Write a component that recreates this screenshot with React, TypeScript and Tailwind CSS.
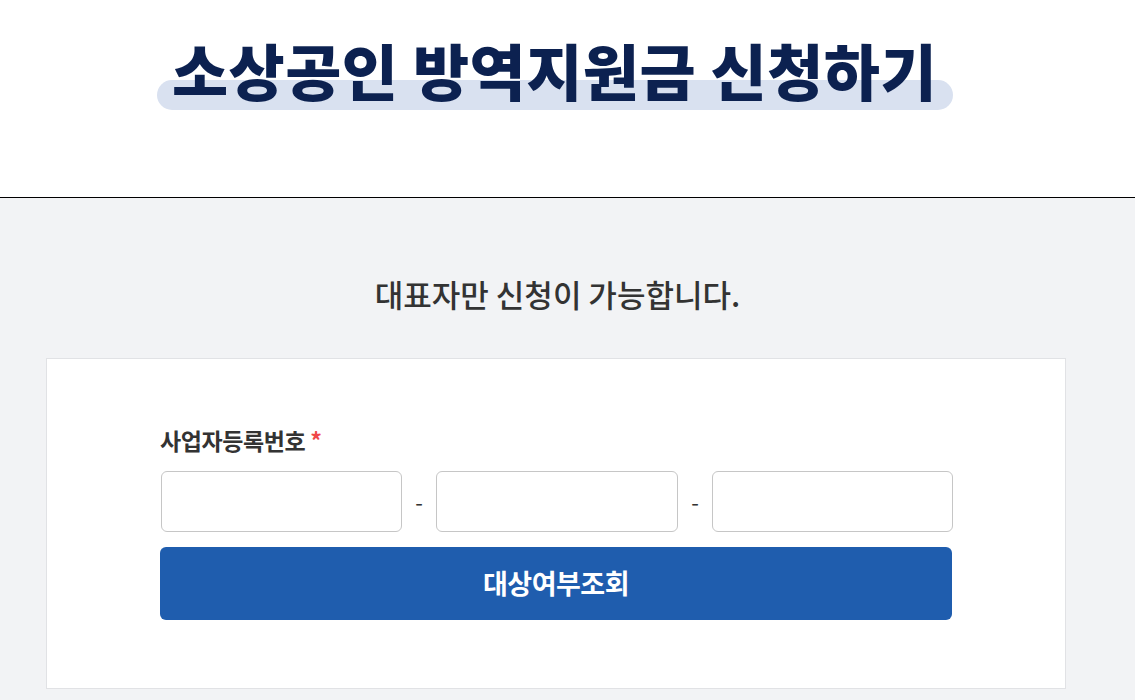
import React from "react";

export default function App() {
  const font = { fontFamily: '"Noto Sans CJK KR", "Noto Sans", sans-serif' };
  return (
    <div className="min-h-[700px] bg-[#f2f3f5]" style={font}>
      <header className="h-[198px] bg-white border-b border-black flex justify-center">
        <div className="relative mt-[32px] w-[796px] h-[80px] ml-[-26px]">
          <div className="absolute left-0 right-0 top-[48px] h-[30px] rounded-full bg-[#d9e1f0]" />
          <h1 className="relative whitespace-nowrap text-center text-[61px] leading-[76px] font-black text-[#0c2150] tracking-[0.5px]">
            소상공인 방역지원금 신청하기
          </h1>
        </div>
      </header>
      <main className="flex flex-col items-center">
        <p className="mt-[72px] ml-[-20px] text-[31px] leading-[48px] font-medium text-[#333333]">
          대표자만 신청이 가능합니다.
        </p>
        <section className="mt-[40px] ml-[-24px] w-[1020px] h-[331px] bg-white border border-[#e1e2e5] flex flex-col items-center">
          <div className="w-[793px] mt-[66px] ml-[2px]">
            <label className="block text-[23px] leading-[30px] font-bold text-[#333333] tracking-[-0.4px]">
              사업자등록번호 <span className="text-[#f04848]">*</span>
            </label>
            <div className="mt-[16px] flex items-center">
              <input className="w-[241px] h-[61px] ml-[1px] rounded-[6px] border border-[#c6c6c6] bg-white outline-none" />
              <span className="w-[34px] text-center text-[22px] text-[#333333]">-</span>
              <input className="w-[242px] h-[61px] rounded-[6px] border border-[#c6c6c6] bg-white outline-none" />
              <span className="w-[34px] text-center text-[22px] text-[#333333]">-</span>
              <input className="w-[241px] h-[61px] rounded-[6px] border border-[#c6c6c6] bg-white outline-none" />
            </div>
            <button className="mt-[15px] w-[792px] h-[73px] rounded-[6px] bg-[#1f5dae] text-white text-[27px] font-bold tracking-[-0.5px]">
              대상여부조회
            </button>
          </div>
        </section>
      </main>
    </div>
  );
}
